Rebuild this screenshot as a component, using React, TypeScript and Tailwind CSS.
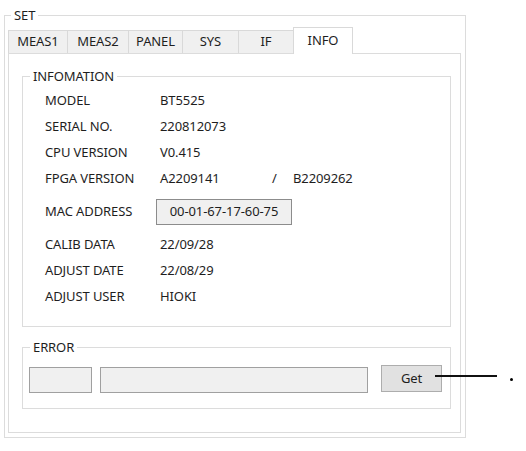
const tabs = [
  { name: 'MEAS1', w: 'w-[59px]' },
  { name: 'MEAS2', w: 'w-[61px]' },
  { name: 'PANEL', w: 'w-[54px]' },
  { name: 'SYS', w: 'w-[56px]' },
  { name: 'IF', w: 'w-[55px]' },
]

const rows = [
  { label: 'MODEL', value: 'BT5525' },
  { label: 'SERIAL NO.', value: '220812073' },
  { label: 'CPU VERSION', value: 'V0.415' },
]

const rowsBottom = [
  { label: 'CALIB DATA', value: '22/09/28' },
  { label: 'ADJUST DATE', value: '22/08/29' },
  { label: 'ADJUST USER', value: 'HIOKI' },
]

function InfoRow({ label, value }: { label: string; value: string }) {
  return (
    <div className="flex h-[26px] items-center">
      <span className="w-[115px]">{label}</span>
      <span>{value}</span>
    </div>
  )
}

export default function App() {
  return (
    <div className="relative h-[451px] w-[526px] overflow-hidden bg-white pl-[4px] pt-[7px] font-['Noto_Sans',sans-serif] text-[13px] tracking-[-0.1px] text-[#1e1e1e]">
      <fieldset className="h-[431px] w-[462px] border border-[#dcdcdc]">
        <legend className="ml-[6px] px-[3px] leading-[16px]">SET</legend>

        <div className="ml-[3px] mt-[4px] w-[453px]">
          {/* tab strip */}
          <div className="flex items-end">
            {tabs.map((t) => (
              <div
                key={t.name}
                className={`${t.w} flex h-[23px] items-center justify-center border-l border-t border-[#d9d9d9] bg-[#f0f0f0]`}
              >
                {t.name}
              </div>
            ))}
            <div className="relative z-10 -mb-px flex h-[27px] w-[60px] items-center justify-center border-x border-t border-[#d9d9d9] bg-white pb-[1px]">
              INFO
            </div>
          </div>

          <div className="h-[380px] border border-[#dcdcdc] bg-white pl-[13px] pt-[14px]">
            <fieldset className="h-[259px] w-[429px] border border-[#dcdcdc]">
              <legend className="ml-[7px] px-[3px] leading-[16px]">INFOMATION</legend>
              <div className="pl-[22px] pt-[4px]">
                {rows.map((r) => (
                  <InfoRow key={r.label} {...r} />
                ))}
                <div className="flex h-[26px] items-center">
                  <span className="w-[115px]">FPGA VERSION</span>
                  <span className="w-[112px]">A2209141</span>
                  <span className="w-[21px]">/</span>
                  <span>B2209262</span>
                </div>
                <div className="flex h-[40px] items-center">
                  <span className="w-[111px]">MAC ADDRESS</span>
                  <div className="flex h-[26px] w-[136px] items-center justify-center border border-[#8c8c8c] bg-[#f0f0f0]">
                    00-01-67-17-60-75
                  </div>
                </div>
                {rowsBottom.map((r) => (
                  <InfoRow key={r.label} {...r} />
                ))}
              </div>
            </fieldset>

            <fieldset className="mt-[12px] h-[70px] w-[429px] border border-[#dcdcdc]">
              <legend className="ml-[7px] px-[3px] leading-[16px]">ERROR</legend>
              <div className="flex items-start pl-[6px] pt-[12px]">
                <div className="h-[26px] w-[63px] border border-[#a0a0a0] bg-[#f0f0f0]" />
                <div className="ml-[8px] h-[26px] w-[268px] border border-[#a0a0a0] bg-[#f0f0f0]" />
                <button className="-mt-[2px] ml-[13px] flex h-[27px] w-[61px] items-center justify-center border border-[#adadad] bg-[#e1e1e1]">
                  Get
                </button>
              </div>
            </fieldset>
          </div>
        </div>
      </fieldset>

      {/* callout leader */}
      <div className="absolute left-[435px] top-[375px] h-[2px] w-[62px] bg-[#111]" />
      <div className="absolute left-[510px] top-[378px] h-[3px] w-[3px] rounded-full bg-black" />
    </div>
  )
}
